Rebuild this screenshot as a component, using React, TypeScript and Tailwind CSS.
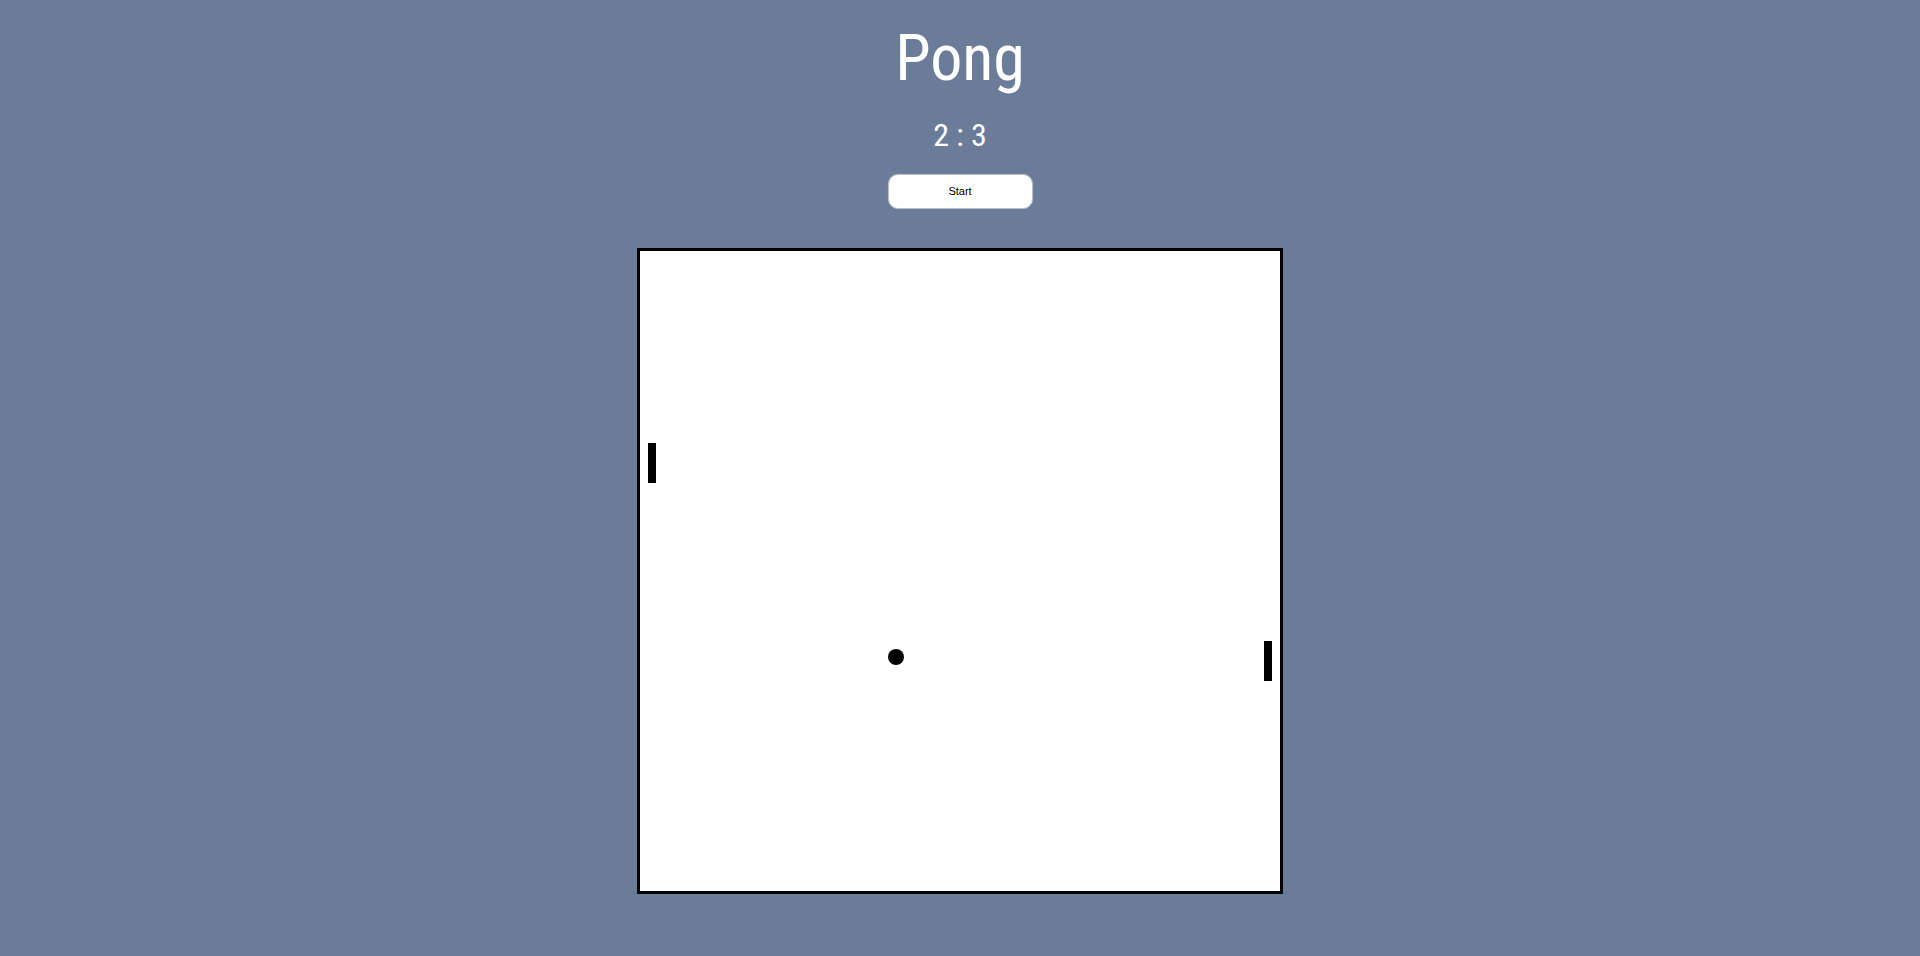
export default function App() {
  const paddleLeft = { x: 8, y: 192 };
  const paddleRight = { x: 624, y: 390 };
  const ball = { x: 248, y: 398 };

  return (
    <div className="min-h-screen w-full bg-[#6b7c99] flex flex-col items-center pt-[27px] font-['Roboto_Condensed','Roboto',sans-serif]">
      <h1 className="text-white text-[64px] leading-none font-normal">Pong</h1>
      <div className="mt-[28px] text-white text-[32px] leading-none">2 : 3</div>
      <button className="mt-[23px] w-[145px] h-[35px] bg-white rounded-[10px] border border-[#b9bdc5] shadow-[0_0_1px_#9aa3b3] text-[11px] text-black font-['Liberation_Sans',Arial,sans-serif]">
        Start
      </button>

      {/* game board */}
      <div className="mt-[39px] relative w-[646px] h-[646px] bg-white border-[3px] border-black">
        <div
          className="absolute w-[8px] h-[40px] bg-black"
          style={{ left: paddleLeft.x, top: paddleLeft.y }}
        />
        <div
          className="absolute w-[8px] h-[40px] bg-black"
          style={{ left: paddleRight.x, top: paddleRight.y }}
        />
        <div
          className="absolute w-[16px] h-[16px] rounded-full bg-black"
          style={{ left: ball.x, top: ball.y }}
        />
      </div>
    </div>
  );
}
